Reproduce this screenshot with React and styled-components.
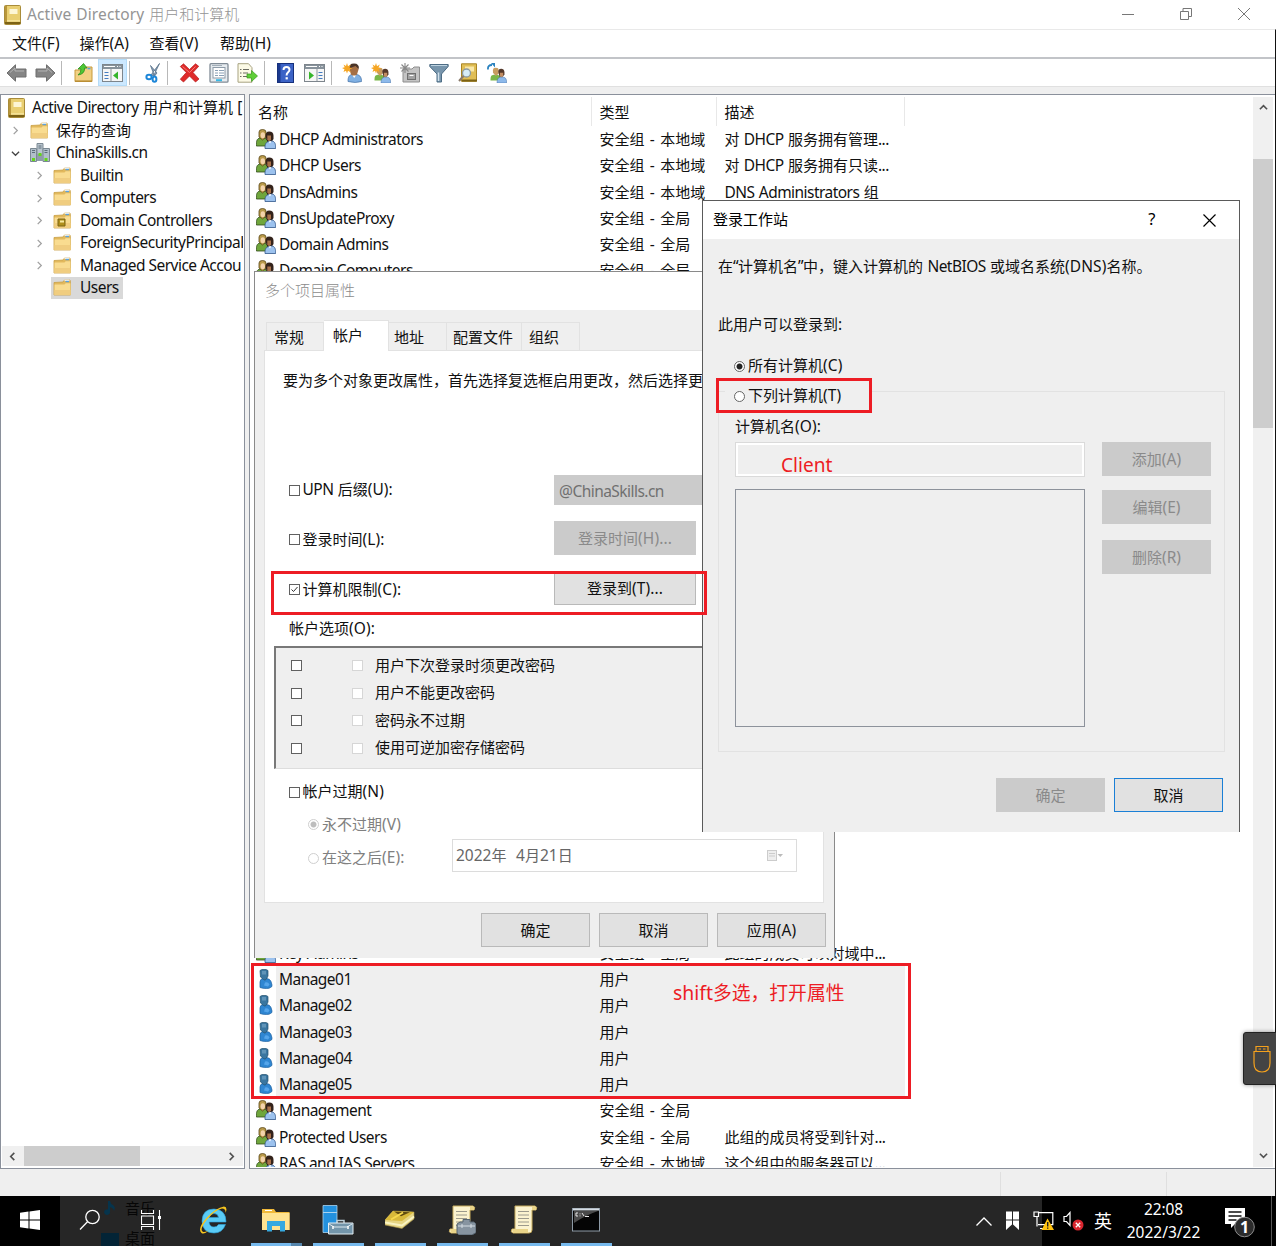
import React from "react";
import styled, { createGlobalStyle, css } from "styled-components";

const Global = createGlobalStyle`
  html, body { margin: 0; padding: 0; overflow: hidden; background: #000; }
  * { box-sizing: border-box; }
  body { font: 15px/22px "Noto Sans", "Noto Sans CJK SC", sans-serif; color: #111; }
  svg { display: block; flex: none; }
`;

/* ---------- text ---------- */
const TextBox = styled.span`
  display: inline-block;
  white-space: pre;
  font-size: ${(p) => p.$size || 15}px;
  color: ${(p) => p.$color || "inherit"};
  line-height: 20px;
  padding-bottom: 2px;
`;
const Latin = styled.span`
  font-size: 1.033em;
  line-height: 1;
  letter-spacing: ${(p) => p.$track}px;
  word-spacing: ${(p) => p.$words}px;
`;
const Han = styled.span`
  font-family: "Noto Sans CJK SC", sans-serif;
  font-weight: ${(p) => (p.$light ? 300 : 400)};
`;
const IS_LATIN = /[\x00-\x7f\u201c\u201d]/;
function latinTrack(run) {
  if (run[0] === "(") return 0.1;
  if (run === " - ") return 0.4;
  return -0.53;
}
function Text({ children, size, color, track, light }) {
  const runs = children.match(/[\x00-\x7f\u201c\u201d]+|[^\x00-\x7f\u201c\u201d]+/g) || [];
  return (
    <TextBox $size={size} $color={color}>
      {runs.map((r, i) =>
        IS_LATIN.test(r[0]) ? (
          <Latin key={i} $track={track ?? latinTrack(r)} $words={/^ | $/.test(r) ? 0.8 : 0}>{r}</Latin>
        ) : (
          <Han key={i} $light={light}>{r}</Han>
        )
      )}
    </TextBox>
  );
}

/* ---------- icons ---------- */
const BookIcon = () => (
  <svg width="17" height="20" viewBox="0 0 17 20">
    <rect x="0.5" y="0.5" width="16" height="19" rx="1" fill="#d6b64e" stroke="#a98c3a" />
    <rect x="3" y="1" width="13" height="15" fill="#e9cf72" />
    <rect x="1" y="1" width="2" height="17" fill="#b8963a" />
    <rect x="5.5" y="4" width="8" height="5" fill="#fdf6d5" />
    <path d="M1 17h15.5v2H1z" fill="#7c6215" />
    <path d="M3 16h13" stroke="#fff3b8" />
  </svg>
);
const FolderIcon = ({ badge }) => (
  <svg width="20" height="18" viewBox="0 0 20 18">
    <path d="M1 3.5L10 3l1.500-2H17l.5 2.500V16H1z" fill="#e2b95c" stroke="#c99f45" strokeWidth=".8" />
    <path d="M1.500 5.500h10l1.200-1.200H17.500V16H1.500z" fill="#f9dc90" />
    <path d="M1.500 11h16v5h-16z" fill="#f0cd80" />
    <path d="M11.500 1.300h5" stroke="#fff" strokeWidth="1.200" />
    <rect x="12.500" y="1.800" width="3.500" height="1.400" fill="#5ba2e0" />
    {badge && <path d="M5 7h7v7H5z" fill="#b08f1c" stroke="#7c6413" />}
    {badge && <path d="M7 8.500h4v2H7z" fill="#f7e9a2" />}
  </svg>
);
const DomainIcon = () => (
  <svg width="20" height="20" viewBox="0 0 20 20">
    <path d="M7 .5h6v12H7z" fill="#b9c5ce" stroke="#7d8a94" />
    <path d="M.5 5.500h6v13h-6zM13 5.500h6.500v13H13z" fill="#b1bfca" stroke="#7a8892" />
    <path d="M7 11h6v7H7z" fill="#8f9da8" />
    <path d="M2 7.500h3M2 9.500h3M14.500 7.500h3M14.500 9.500h3M8.500 3h3M8.500 5h3" stroke="#5d6d79" />
    <path d="M2 15h3v3H2zM14.500 15h3v3h-3zM8.500 10h3v3h-3z" fill="#65d61b" />
  </svg>
);
const GroupIcon = () => (
  <svg width="20" height="20" viewBox="0 0 20 20">
    <path d="M.4 17c-.3-5 .6-7.500 3.600-8h5l3 3v5z" fill="#6fa63c" stroke="#2e4a18" strokeWidth=".8" />
    <path d="M3 8V3Q3 .5 6.500.5T10 3v5l-3.500 3z" fill="#b99a4a" stroke="#5b4718" strokeWidth=".8" />
    <ellipse cx="6.800" cy="6.200" rx="2.200" ry="3" fill="#f3d3ab" />
    <path d="M9.500 8q-.5-5.500 3.700-5.500T17.500 6.500v3.500l-2 3h-4z" fill="#33221a" />
    <path d="M11.300 6.500h3.700v4l-1.800 2-1.900-2z" fill="#a9714a" />
    <path d="M9 19.500c-.2-4.500 1-6.500 4-7l3-.5c3 .5 3.700 3 3.700 7.500z" fill="#9cc2ee" stroke="#31578a" strokeWidth=".8" />
    <path d="M12.500 12.500l1.500 2 1.500-2.400z" fill="#fff" />
  </svg>
);
const UserIcon = () => (
  <svg width="20" height="20" viewBox="0 0 20 20">
    <path d="M4 18.500V13q0-3 3-3.500h3q4 0 5 3l1 3.500q.3 2-1.500 2.500-1 1-4 1-4 0-6.500-1z" fill="#2f86d2" stroke="#1a5e9f" strokeWidth=".7" />
    <path d="M4 1.500L6 .5h4l2 1v5.500l-1.500 3Q9 12 7.500 10.500L4.500 8z" fill="#3a76a0" stroke="#22516f" strokeWidth=".7" />
    <path d="M6 2h4v3.500H6z" fill="#6094b8" />
    <path d="M9 13.500q3-1 4.500 2l-1.500 2-4-1z" fill="#55a5ea" />
  </svg>
);
const ArrowIcon = ({ flip }) => (
  <svg width="21" height="20" viewBox="0 0 21 20">
    <g transform={flip ? "translate(21 0) scale(-1 1)" : undefined}>
      <path d="M1 10L9.500 1.800V6H20v8H9.500v4.200z" fill="#858585" stroke="#6e6e6e" strokeLinejoin="round" />
      <path d="M4 9.500L9 5v3h9" fill="none" stroke="#b4b4b4" />
    </g>
  </svg>
);
const UpFolderIcon = () => (
  <svg width="20" height="20" viewBox="0 0 20 20">
    <path d="M1 7h9l2-3h6v14.500H1z" fill="#f2d084" stroke="#c79a3c" />
    <path d="M1 18h17" stroke="#ae822c" />
    <rect x="13.500" y="4.800" width="3" height="1.500" fill="#5ba2e0" />
    <path d="M4 12Q7 10 7 6H4l5.500-5.500L13 5h-2.500Q11 11 4 12z" fill="#4ec736" stroke="#2d8f1d" strokeWidth=".8" />
  </svg>
);
const PanelIcon = ({ flip }) => (
  <svg width="21" height="18" viewBox="0 0 21 18">
    <rect x=".5" y=".5" width="20" height="17" fill="#f6f6f6" stroke="#7d858c" />
    <path d="M1 1h19v4H1z" fill="#87929b" />
    <path d="M2 2.500h11M15 2.500h1M17.500 2.500h1" stroke="#fff" />
    {flip ? (
      <g>
        <path d="M13 5v12" stroke="#8d969d" />
        <path d="M5 7.500l5 4-5 4z" fill="#36b52b" />
        <path d="M14.500 8.500h4M14.500 11.500h4M14.500 14.500h4" stroke="#447cc0" />
      </g>
    ) : (
      <g>
        <path d="M9 5v12" stroke="#8d969d" />
        <path d="M16 7.500l-5 4 5 4z" fill="#36b52b" />
        <path d="M2.500 8.500h4M2.500 11.500h4M2.500 14.500h4" stroke="#447cc0" />
      </g>
    )}
  </svg>
);
const CutIcon = () => (
  <svg width="16" height="20" viewBox="0 0 16 20">
    <path d="M14.500.5L8.500 13l-2.500-1zM5.500 2.500L9.500 13 12 10z" fill="#8aa0b5" stroke="#58718a" strokeWidth=".8" />
    <ellipse cx="4" cy="14" rx="2.600" ry="2.300" fill="none" stroke="#1d86d8" strokeWidth="2" />
    <ellipse cx="9.500" cy="16.200" rx="1.900" ry="2.600" fill="none" stroke="#1d86d8" strokeWidth="2" />
  </svg>
);
const DeleteIcon = () => (
  <svg width="21" height="20" viewBox="0 0 20 20">
    <path d="M.8 3.500L4 .8l6 5.700L16 .8l3.200 2.500L13.500 9.500l6 6.500-3.500 3L10 13l-6 6-3.200-2.800 6-6.700z" fill="#df2a2a" stroke="#b51c1c" strokeWidth=".7" />
    <path d="M3 3.500l7 6 6-6" fill="none" stroke="#f47a74" />
  </svg>
);
const PropsIcon = () => (
  <svg width="20" height="20" viewBox="0 0 20 20">
    <rect x="1" y=".7" width="18" height="18.500" rx="1" fill="#e6ebef" stroke="#818c96" strokeWidth="1.300" />
    <rect x="4" y="4.500" width="12" height="10.500" fill="#fff" stroke="#8d9ba8" />
    <path d="M3 2.500h10" stroke="#a3afb9" />
    <path d="M6 7.500h3M6 10h3M6 12.500h3M10 7.500h5M10 10h5M10 12.500h5" stroke="#8aa0b5" />
    <path d="M7 17.200h6" stroke="#39b9e6" strokeWidth="2" />
  </svg>
);
const ExportIcon = () => (
  <svg width="21" height="20" viewBox="0 0 21 20">
    <path d="M1 .7h10.500l3.500 4v14.500H1z" fill="#fcfae6" stroke="#a7a281" />
    <path d="M3 6.500h1.500M3 10h1.500M3 13.500h1.500M6 6.500h6M6 10h5M6 13.500h5" stroke="#6c6c62" strokeWidth="1.200" />
    <path d="M10 11h4.500V7.500L20.500 13l-6 5.500V15H10z" fill="#5fce38" stroke="#3a9a20" strokeWidth=".7" />
  </svg>
);
const HelpIcon = () => (
  <svg width="17" height="20" viewBox="0 0 17 20">
    <rect x=".5" y=".5" width="16" height="19" fill="#3c63c6" stroke="#16307c" />
    <path d="M1 1h2.500v18H1z" fill="#1b398f" />
    <path d="M6.500 7q0-3 3-3t3 2.800q0 1.500-1.500 2.500T9.600 12.500" fill="none" stroke="#fff" strokeWidth="2" />
    <rect x="8.600" y="14.200" width="2.200" height="2.200" fill="#fff" />
  </svg>
);
const Spark = () => (
  <path d="M5 0l1 3.200L8.800 1.500 7.500 4.500l3 .7-3 1.200 1.300 3L6 7.800 5 10.500 4 7.800 1.500 9l1-2.800L0 5l2.700-.8L1.500 1.500 4 3z" fill="#f6a623" />
);
const NewUserIcon = () => (
  <svg width="20" height="20" viewBox="0 0 20 20">
    <path d="M6 18.500c0-4.500 1-6.500 4-7h4.500c4 .5 5 3.500 5 7q-6 2-13.500 0z" fill="#7fb0e3" stroke="#416fa5" strokeWidth=".7" />
    <path d="M7.500 6.500q0-5.500 4.500-5.500t4.500 5.500l-1.500 5-3 2-3-2z" fill="#a46f45" />
    <path d="M7 6q-.5-5.500 5-5.500T16.800 6l-3.300-3-4 1.500z" fill="#4a3428" />
    <path d="M10.500 12.500l1.700 2.500 1.800-2.500z" fill="#fff" />
    <Spark />
  </svg>
);
const SmallGroup = () => (
  <g transform="translate(3.500 4) scale(.82)">
    <path d="M0 16c0-5 1-6 4-6.500h5l3 2v5H0z" fill="#7ab648" />
    <path d="M3 7V4Q3 1 6.500 1T10 4v4l-3.500 3z" fill="#c79c60" />
    <path d="M9.500 6q0-4 3.500-4t4 4v3l-2 3h-4z" fill="#54382a" />
    <path d="M11.500 7h4v4l-2 2-2-2z" fill="#c28d62" />
    <path d="M8 19.500c0-5 1.500-6.500 4-7h4c3 .5 3.700 3 3.700 7z" fill="#8db9ea" stroke="#3d6ba5" strokeWidth=".6" />
  </g>
);
const NewGroupIcon = () => (
  <svg width="20" height="20" viewBox="0 0 20 20"><SmallGroup /><Spark /></svg>
);
const NewOuIcon = () => (
  <svg width="20" height="20" viewBox="0 0 20 20">
    <path d="M3 6h9l2-2h5.500v15H3z" fill="#c4c4c4" stroke="#8e8e8e" />
    <rect x="7.500" y="10.500" width="8" height="6" fill="#a2a2a2" stroke="#6f6f6f" />
    <path d="M9.500 12.500h4" stroke="#fff" />
    <path d="M5 0v10M0 5h10M1.500 1.500l7 7M8.500 1.500l-7 7" stroke="#888" strokeWidth="1.100" />
  </svg>
);
const FilterIcon = () => (
  <svg width="20" height="20" viewBox="0 0 20 20">
    <path d="M.8 1.500h18.400v2L12.500 11v8h-4.500V11L.8 3.500z" fill="#7795ac" stroke="#4d6c84" />
    <path d="M2 2.500h16" stroke="#bdd2e0" />
    <path d="M9.500 9.500v8.500" stroke="#d2e2ed" strokeWidth="1.500" />
  </svg>
);
const FindIcon = () => (
  <svg width="20" height="20" viewBox="0 0 20 20">
    <path d="M3.500.8h15v17.500h-15z" fill="#e0be55" stroke="#a98525" />
    <path d="M4 16.500h15v2H4z" fill="#7c6215" />
    <path d="M7 3.500h9v5H7z" fill="#f8e7a8" />
    <circle cx="8.500" cy="10" r="4" fill="#d6edf8" stroke="#8c999f" strokeWidth="1.300" />
    <path d="M5.500 13L1 18" stroke="#8a7a6a" strokeWidth="2" />
  </svg>
);
const JoinGroupIcon = () => (
  <svg width="20" height="20" viewBox="0 0 20 20">
    <SmallGroup />
    <path d="M1 6.500Q.5 2 5 2" fill="none" stroke="#2a82bf" strokeWidth="1.800" />
    <path d="M4 0h4v4.500z" fill="#2a82bf" />
  </svg>
);
const Chevron = ({ dir = "right", color = "#505050", size = 9, weight = 1.8 }) => {
  const rot = { right: 0, down: 90, left: 180, up: 270 }[dir];
  return (
    <svg width={size} height={size} viewBox="0 0 10 10">
      <path transform={`rotate(${rot} 5 5)`} d="M3 1l4 4-4 4" fill="none" stroke={color} strokeWidth={weight} />
    </svg>
  );
};

/* ---------- main window ---------- */
const Desktop = styled.div`
  position: relative;
  width: 1276px;
  height: 1246px;
  overflow: hidden;
  display: flex;
  flex-direction: column;
`;
const MainWindow = styled.div`
  height: 1196px;
  display: flex;
  flex-direction: column;
  background: #efefef;
`;
const TitleBar = styled.div`
  height: 29px;
  flex: none;
  background: #fff;
  display: flex;
  align-items: center;
  padding-left: 4px;
  gap: 6px;
`;
const Caption = styled.div`
  margin-left: auto;
  display: flex;
  align-items: center;
  gap: 46px;
  padding: 0 26px 1px 0;
`;
const Body = styled.div`
  flex: 1;
  min-height: 0;
  border-right: 1px solid #111;
  border-top: 1px solid #e9e9e9;
  display: flex;
  flex-direction: column;
`;
const MenuBar = styled.div`
  height: 27px;
  flex: none;
  background: #fff;
  display: flex;
  align-items: center;
  padding-left: 12px;
`;
const MenuItem = styled.div`
  width: ${(p) => p.$w}px;
`;
const ToolBar = styled.div`
  height: 30px;
  flex: none;
  background: #fff;
  border-top: 2px solid #c2c4c8;
  border-bottom: 1px solid #e0e0e0;
  display: flex;
  padding-left: 2px;
`;
const Tool = styled.div`
  width: 29px;
  display: flex;
  align-items: center;
  justify-content: center;
  padding-top: 1px;
  ${(p) => p.$on && css`background: #cce8ff; box-shadow: inset 0 0 0 1px #b5dcf8;`}
`;
const Separator = styled.div`
  width: ${(p) => p.$w}px;
  padding: 2px 0 1px ${(p) => p.$at}px;
  &::before { content: ""; display: block; width: 1px; height: 100%; background: #b8b8b8; }
`;
const Panes = styled.div`
  flex: 1;
  min-height: 0;
  display: flex;
  gap: 4px;
  padding-top: 7px;
`;
const Pane = styled.div`
  background: #fff;
  border: 1.500px solid #8a909b;
  overflow: hidden;
  display: flex;
`;
const TreePane = styled(Pane)`
  width: 245px;
  flex-direction: column;
  padding: 2px 1px 2px 1px;
`;
const ListPane = styled(Pane)`
  flex: 1;
  border-right: none;
  padding: 2px 2px 1px 0;
`;
const Tree = styled.div`
  flex: 1;
  overflow: hidden;
`;
const TreeRow = styled.div`
  height: 22.500px;
  display: flex;
  align-items: center;
  white-space: nowrap;
  padding-left: ${(p) => p.$indent}px;
`;
const Twisty = styled.div`
  width: ${(p) => p.$w}px;
  flex: none;
  padding-left: 1px;
`;
const TreeLabel = styled.div`
  display: flex;
  align-items: center;
  height: 22px;
  gap: ${(p) => p.$gap || 7}px;
  padding: 0 4px 0 2px;
  background: ${(p) => (p.$on ? "#d9d9d9" : "transparent")};
`;
const HScroll = styled.div`
  height: 20px;
  background: #f0f0f0;
  display: flex;
  align-items: center;
  padding: 0 7px 0 6px;
`;
const HThumb = styled.div`
  width: 116px;
  height: 20px;
  background: #cdcdcd;
  margin: 0 auto 0 7px;
`;
const ListArea = styled.div`
  flex: 1;
  overflow: hidden;
`;
const Columns = styled.div`
  display: grid;
  grid-template-columns: 342px 125px 188px;
`;
const HeaderRow = styled(Columns)`
  height: 29px;
`;
const HeaderCell = styled.div`
  border-right: 1px solid #e8e8e8;
  padding: ${(p) => p.$pad};
`;
const ListRow = styled(Columns)`
  height: 26.250px;
  align-items: center;
`;
const NameCell = styled.div`
  display: flex;
  align-items: center;
  height: 100%;
  padding-left: 6px;
`;
const NameLabel = styled.div`
  flex: 1;
  height: 100%;
  padding: 2px 0 0 3px;
  background: ${(p) => (p.$on ? "#efefef" : "transparent")};
`;
const Cell = styled.div`
  height: 100%;
  padding: 2px 0 0 7.500px;
  background: ${(p) => (p.$on ? "#efefef" : "transparent")};
`;
const CoveredRows = styled.div`
  height: 656.250px;
`;
const VScroll = styled.div`
  width: 20px;
  background: #f0f0f0;
  display: flex;
  flex-direction: column;
  align-items: center;
  padding: 6px 0 7px;
`;
const VThumb = styled.div`
  width: 20px;
  height: 269px;
  background: #cdcdcd;
  margin: 47px 0 auto;
`;
const StatusBar = styled.div`
  height: 27px;
  flex: none;
  display: grid;
  grid-template-columns: 1001px 166px 1fr;
`;
const StatusCell = styled.div`
  border-right: 1px solid #dfdfdf;
  margin-top: 3px;
`;

const TREE = [
  { t: "保存的查询", lv: 1, dir: "right", icon: <FolderIcon /> },
  { t: "ChinaSkills.cn", lv: 1, dir: "down", icon: <DomainIcon /> },
  { t: "Builtin", lv: 2, dir: "right", icon: <FolderIcon /> },
  { t: "Computers", lv: 2, dir: "right", icon: <FolderIcon /> },
  { t: "Domain Controllers", lv: 2, dir: "right", icon: <FolderIcon badge /> },
  { t: "ForeignSecurityPrincipal", lv: 2, dir: "right", icon: <FolderIcon /> },
  { t: "Managed Service Accou", lv: 2, dir: "right", icon: <FolderIcon /> },
  { t: "Users", lv: 2, icon: <FolderIcon />, on: true },
];
const LOCAL = "安全组 - 本地域";
const GLOBAL = "安全组 - 全局";
const TOP_ROWS = [
  ["DHCP Administrators", LOCAL, "对 DHCP 服务拥有管理..."],
  ["DHCP Users", LOCAL, "对 DHCP 服务拥有只读..."],
  ["DnsAdmins", LOCAL, "DNS Administrators 组"],
  ["DnsUpdateProxy", GLOBAL, ""],
  ["Domain Admins", GLOBAL, ""],
  ["Domain Computers", GLOBAL, ""],
];
const BOTTOM_ROWS = [
  ["Key Admins", GLOBAL, "此组的成员可以对域中..."],
  ["Manage01", "用户", "", true],
  ["Manage02", "用户", "", true],
  ["Manage03", "用户", "", true],
  ["Manage04", "用户", "", true],
  ["Manage05", "用户", "", true],
  ["Management", GLOBAL, ""],
  ["Protected Users", GLOBAL, "此组的成员将受到针对..."],
  ["RAS and IAS Servers", LOCAL, "这个组中的服务器可以..."],
];
const Entry = ({ row: [name, type, desc, on] }) => (
  <ListRow>
    <NameCell>
      {on ? <UserIcon /> : <GroupIcon />}
      <NameLabel $on={on}><Text>{name}</Text></NameLabel>
    </NameCell>
    <Cell $on={on}><Text>{type}</Text></Cell>
    <Cell $on={on}><Text>{desc}</Text></Cell>
  </ListRow>
);

/* ---------- dialogs ---------- */
const Dialog = styled.div`
  position: absolute;
  left: ${(p) => p.$x}px;
  top: ${(p) => p.$y}px;
  width: ${(p) => p.$w}px;
  height: ${(p) => p.$h}px;
  border: 1px solid ${(p) => p.$edge};
  border-bottom: none;
  background: #efefef;
  display: flex;
  flex-direction: column;
`;
const DialogTitle = styled.div`
  height: 38px;
  flex: none;
  background: #fff;
  display: flex;
  align-items: center;
  padding: 0 23px 0 ${(p) => p.$pad}px;
`;
const TitleButtons = styled.div`
  margin-left: auto;
  display: flex;
  align-items: center;
  gap: 48px;
`;
const Tabs = styled.div`
  display: flex;
  align-items: flex-end;
  height: 40px;
  padding-left: 11px;
`;
const Tab = styled.div`
  width: ${(p) => p.$w}px;
  height: ${(p) => (p.$on ? 31 : 28)}px;
  margin-bottom: ${(p) => (p.$on ? -1 : 0)}px;
  padding: 3px 0 0 ${(p) => p.$pad}px;
  border: 1px solid #e2e2e2;
  border-bottom: none;
  border-left-width: ${(p) => (p.$first ? 1 : 0)}px;
  background: ${(p) => (p.$on ? "#fff" : "#efefef")};
  position: relative;
`;
const Page = styled.div`
  height: 553px;
  margin: 0 10px 0 9px;
  border: 1px solid #e2e2e2;
  background: #fff;
  display: flex;
  flex-direction: column;
  padding-top: 14px;
`;
const Row = styled.div`
  height: ${(p) => p.$h}px;
  margin-top: ${(p) => p.$mt || 0}px;
  padding-left: ${(p) => p.$pl}px;
  padding-top: ${(p) => p.$pt || 0}px;
  display: flex;
  align-items: center;
  flex: none;
`;
const Check = styled.div`
  width: 11px;
  height: 11px;
  flex: none;
  margin-right: ${(p) => p.$gap ?? 3}px;
  border: 1px solid ${(p) => (p.$dim ? "#d6d6d6" : "#606060")};
  background: #fff;
`;
const Radio = styled.div`
  width: 11px;
  height: 11px;
  flex: none;
  margin-right: 3px;
  border-radius: 50%;
  border: 1px solid ${(p) => (p.$dim ? "#cfcfcf" : "#666")};
  background: ${(p) =>
    p.$on ? `radial-gradient(circle, ${p.$dim ? "#bdbdbd" : "#222"} 0 2.600px, #fff 3.400px)` : "#fff"};
`;
const Field = styled.div`
  margin-left: auto;
  width: 269px;
  height: 30px;
  background: #cbcbcb;
  padding: 5px 0 0 5px;
`;
const Button = styled.div`
  width: ${(p) => p.$w || 109}px;
  height: 34px;
  display: flex;
  align-items: center;
  justify-content: center;
  flex: none;
  background: ${(p) => (p.$off ? "#cbcbcb" : "#e1e1e1")};
  border: 1px solid ${(p) => (p.$off ? "#cbcbcb" : p.$focus ? "#1a7fd6" : "#b9b9b9")};
  padding-top: 1px;
  color: ${(p) => (p.$off ? "#8a8a8a" : "#111")};
`;
const RowButton = styled(Button)`
  margin-top: -3px;
  margin-left: auto;
  margin-right: 127px;
`;
const OptionList = styled.div`
  height: 123px;
  flex: none;
  margin: 6px 26px 0 9px;
  border: 2px solid #787878;
  border-right: none;
  border-bottom: 1px solid #ddd;
  background: #efefef;
  padding: 4px 0 0 15px;
`;
const OptionRow = styled.div`
  display: flex;
  align-items: center;
  height: 27.500px;
`;
const DateField = styled.div`
  margin: -5px 26px 0 auto;
  width: 345px;
  height: 33px;
  border: 1px solid #dcdcdc;
  display: flex;
  align-items: center;
  justify-content: space-between;
  padding: 0 13px 0 3px;
`;
const Footer = styled.div`
  display: flex;
  justify-content: flex-end;
  gap: 9px;
  padding: ${(p) => p.$pad};
`;
const Group = styled.div`
  margin: 10px 14px 0 15px;
  height: 361px;
  flex: none;
  border: 1px solid #e2e2e2;
`;
const Legend = styled.div`
  width: 146px;
  height: 30px;
  margin: -11px 0 0 6px;
  padding-left: 9px;
  background: #efefef;
  display: flex;
  align-items: center;
`;
const GroupBody = styled.div`
  display: flex;
  gap: 17px;
  padding: 5px 0 0 16px;
`;
const NameColumn = styled.div`
  display: flex;
  flex-direction: column;
  width: 350px;
`;
const NameInput = styled.div`
  height: 35px;
  margin: 4px 0 12px;
  border: 1px solid #dadada;
  box-shadow: inset 0 0 0 2px #fff;
`;
const NameList = styled.div`
  height: 238px;
  border: 1.500px solid #8d929b;
`;
const ButtonColumn = styled.div`
  display: flex;
  flex-direction: column;
  padding-top: 26px;
`;
const Spacer = styled.div`
  height: ${(p) => p.$h}px;
`;

/* ---------- annotations laid over the windows ---------- */
const Mark = styled.div`
  position: absolute;
  left: ${(p) => p.$x}px;
  top: ${(p) => p.$y}px;
  width: ${(p) => p.$w}px;
  height: ${(p) => p.$h}px;
  border: 3px solid #ed1c24;
`;
const Note = styled.div`
  position: absolute;
  left: ${(p) => p.$x}px;
  top: ${(p) => p.$y}px;
`;
const UsbTab = styled.div`
  position: absolute;
  left: 1243px;
  top: 1032px;
  width: 36px;
  height: 53px;
  border-radius: 3px;
  background: #444;
  border: 1px solid #222;
  box-shadow: 0 0 4px #0006;
  padding: 12px 0 0 8px;
`;

/* ---------- taskbar ---------- */
const TaskBar = styled.div`
  height: 50px;
  background: linear-gradient(90deg, #000 60px, #262626 60px 1042px, #000 1042px);
  display: flex;
  position: relative;
  color: #fff;
`;
const Ghosts = styled.div`
  position: absolute;
  left: 101px;
  top: -2px;
  color: #060606;
`;
const GhostRow = styled.div`
  display: flex;
  align-items: center;
  gap: 6px;
  height: 30px;
`;
const Task = styled.div`
  width: ${(p) => p.$w}px;
  display: flex;
  align-items: center;
  justify-content: center;
  position: relative;
  padding-bottom: 2px;
`;
const Running = styled.div`
  position: absolute;
  left: 6px;
  bottom: 0;
  width: 51px;
  height: 3px;
  background: ${(p) => (p.$multi ? "linear-gradient(90deg, #76b9ed 40px, #5686ad 40px)" : "#76b9ed")};
`;
const Tray = styled.div`
  margin-left: auto;
  display: flex;
  align-items: center;
`;
const TrayItem = styled.div`
  width: ${(p) => p.$w}px;
  display: flex;
  justify-content: center;
`;
const Clock = styled.div`
  width: 91px;
  display: flex;
  flex-direction: column;
  align-items: center;
  gap: 1px;
`;
const ShowDesktop = styled.div`
  width: 5px;
  height: 50px;
  border-left: 1px solid #555;
`;

const WindowsLogo = () => (
  <svg width="20" height="20" viewBox="0 0 20 20">
    <path d="M0 2.800L8.500 1.600v7.900H0zM9.500 1.500L20 0v9.500H9.500zM0 10.500h8.500v7.900L0 17.200zM9.500 10.500H20V20L9.500 18.500z" fill="#fff" />
  </svg>
);
const SearchIcon = () => (
  <svg width="22" height="22" viewBox="0 0 22 22">
    <circle cx="13.500" cy="8" r="6.700" fill="none" stroke="#fff" strokeWidth="1.300" />
    <path d="M8.500 12.800L1 20.500" stroke="#fff" strokeWidth="1.300" />
  </svg>
);
const TaskViewIcon = () => (
  <svg width="20" height="20" viewBox="0 0 20 20">
    <path d="M.5 0v3.500h12V0M.5 6h12v8.500H.5zM.5 20v-3.500h12V20M18.500 0v20" fill="none" stroke="#fff" strokeWidth="1.100" />
    <path d="M17 6h3v3h-3z" fill="#fff" />
  </svg>
);
const IeIcon = () => (
  <svg width="30" height="30" viewBox="0 0 30 30">
    <path d="M28 17H11q.5 5 5 5 3 0 4.500-2.500h7Q24.500 28 16 28 4.500 28 4 16 4.500 4 16 4q12 .5 12 13zM11 12.500h9.500Q20 8.500 16 8.500t-5 4z" fill="#5acbf5" fillRule="evenodd" stroke="#2ba3dd" strokeWidth=".6" />
    <path d="M3.500 28Q-1 24 8 13.500 18 2.500 26 1.500 30 2 27.500 8 28 3.500 24 3.500 17 5 9 14.500 1.500 24 4.500 26.500 7 28 11 25 6 30 3.500 28z" fill="#f7c51e" />
  </svg>
);
const ExplorerIcon = () => (
  <svg width="28" height="24" viewBox="0 0 28 24">
    <path d="M0 1h12l2 3h13.500v18H0z" fill="#f0b93a" />
    <path d="M0 5h27.500v17H0z" fill="#ffe391" />
    <path d="M3 2.500h7" stroke="#fff" />
    <path d="M5 23.500V13h18v10.500h-5V18h-8v5.500z" fill="#35a9e1" />
  </svg>
);
const ServerManagerIcon = () => (
  <svg width="32" height="30" viewBox="0 0 32 30">
    <path d="M1 .5h14v27H1z" fill="#2391de" stroke="#a9d3ef" strokeWidth=".8" />
    <path d="M1 7.500h14" stroke="#a9d3ef" />
    <path d="M15 18v-2.500h7V18" fill="none" stroke="#b9ccd6" strokeWidth="1.500" />
    <path d="M6.500 18H31v11H6.500z" fill="#7395aa" stroke="#e3edf2" />
    <path d="M7 19l5 3h13l5-3" fill="none" stroke="#dbe7ee" />
    <path d="M11 21v3M26 21v3" stroke="#fff" strokeWidth="1.500" />
  </svg>
);
const BooksIcon = () => (
  <svg width="30" height="20" viewBox="0 0 30 20">
    <path d="M0 10L8 1l21 1v7L17 18.500 0 15z" fill="#e6d584" stroke="#a4904a" strokeWidth=".6" />
    <path d="M0 10L8 1l21 1-12 9z" fill="#d8b93a" />
    <path d="M9 1.500l16 .8-9 4z" fill="#5e4a10" />
    <path d="M6 9.500l12-7" stroke="#f6d94e" strokeWidth="2" />
    <path d="M0 12.500l17 3 12-9" stroke="#f9f3c2" strokeWidth="2" fill="none" />
  </svg>
);
const ScrollIcon = ({ box }) => (
  <svg width="28" height="30" viewBox="0 0 28 30">
    <path d="M5 1h20q3 1 1 4h-4v20q0 3-3 3H3q-3-1-1-4h3z" fill="#fbf3cf" stroke="#c7ac5c" />
    <path d="M22 5V2q1-2 4 0v3zM2 24h16v4H3z" fill="#e9d489" />
    <path d="M8 6.500h11M8 10h11M8 13.500h11M8 17h11M8 20.500h11" stroke="#9c9a8c" />
    {box && <path d="M9 19l3-2h3v-2.500h7V17h4l2 2v8.500L24 30H11l-2-2z" fill="#8794a0" stroke="#566470" />}
    {box && <path d="M10 21h17M14 19v4M23 19v4" stroke="#d5dde3" />}
  </svg>
);
const ConsoleIcon = () => (
  <svg width="28" height="24" viewBox="0 0 28 24">
    <rect x=".5" y=".5" width="27" height="22.500" fill="#050505" stroke="#8d9aa6" />
    <path d="M1 1.500h26" stroke="#d5dce3" strokeWidth="2" />
    <path d="M2 3h24Q14 7 2 15z" fill="#4a4a4a" />
    <path d="M6 5H4v3h2M8 5.500v.8M8 7.500v.8M10 5l2 3M13 8.500h4" stroke="#e6e6e6" fill="none" />
  </svg>
);
const FlagIcon = () => (
  <svg width="14" height="20" viewBox="0 0 14 20">
    <path d="M0 .5h6v8H0zM7 .5h6v8H7zM0 9.500h6v4L0 19zM7 9.500h6V19l-6-5.500z" fill="#fff" />
  </svg>
);
const NetworkIcon = () => (
  <svg width="21" height="20" viewBox="0 0 21 20">
    <path d="M5 1.700h14.800v12H5M4 6v9.500M1 1h4.500v4.500H1zM7 17.500h6" fill="none" stroke="#fff" strokeWidth="1.200" />
    <path d="M14.500 7.500L21 19H8.500z" fill="#ffc20e" />
    <path d="M14.700 11v4.500M14.700 16.500v1.300" stroke="#222" strokeWidth="1.400" />
  </svg>
);
const VolumeIcon = () => (
  <svg width="21" height="20" viewBox="0 0 21 20">
    <path d="M1 5.500h2.500l3.500-4v13l-3.500-4H1z" fill="none" stroke="#fff" strokeWidth="1.200" />
    <circle cx="15" cy="14" r="5.500" fill="#d9262f" />
    <path d="M12.800 11.800l4.400 4.400M17.200 11.800l-4.400 4.400" stroke="#fff" strokeWidth="1.300" />
  </svg>
);
const NoticeIcon = () => (
  <svg width="32" height="34" viewBox="0 0 32 34">
    <path d="M1 4h20v16H11l-4 4v-4H1z" fill="#fff" />
    <path d="M4.500 8h13M4.500 12h13M4.500 16h8" stroke="#111" strokeWidth="1.300" />
    <circle cx="20.500" cy="23" r="9.800" fill="#2b2b2b" stroke="#8d8d8d" />
    <text x="20.500" y="28.500" textAnchor="middle" fontFamily="Noto Sans" fontWeight="700" fontSize="16" fill="#fff">1</text>
  </svg>
);

const TASKS = [
  <ExplorerIcon />, <ServerManagerIcon />, <BooksIcon />, <ScrollIcon box />, <ScrollIcon />, <ConsoleIcon />,
];

export default function App() {
  return (
    <Desktop>
      <Global />
      <MainWindow>
        <TitleBar>
          <BookIcon />
          <Text color="#949494" track={0.13} light>Active Directory 用户和计算机</Text>
          <Caption>
            <svg width="12" height="12"><path d="M0 6.500h12" stroke="#777" /></svg>
            <svg width="12" height="12"><path d="M.5 3.500h8v8h-8zM3 3V.5h8.500v8H9" fill="none" stroke="#777" /></svg>
            <svg width="12" height="12"><path d="M0 0l12 12M12 0L0 12" stroke="#777" /></svg>
          </Caption>
        </TitleBar>
        <Body>
          <MenuBar>
            <MenuItem $w={67.5}><Text>文件(F)</Text></MenuItem>
            <MenuItem $w={70}><Text>操作(A)</Text></MenuItem>
            <MenuItem $w={70.5}><Text>查看(V)</Text></MenuItem>
            <MenuItem $w={70}><Text>帮助(H)</Text></MenuItem>
          </MenuBar>
          <ToolBar>
            <Tool><ArrowIcon /></Tool>
            <Tool><ArrowIcon flip /></Tool>
            <Separator $w={9} $at={1} />
            <Tool><UpFolderIcon /></Tool>
            <Tool $on><PanelIcon /></Tool>
            <Separator $w={11} $at={2} />
            <Tool><CutIcon /></Tool>
            <Separator $w={8} $at={0} />
            <Tool><DeleteIcon /></Tool>
            <Tool><PropsIcon /></Tool>
            <Tool><ExportIcon /></Tool>
            <Separator $w={9} $at={2} />
            <Tool><HelpIcon /></Tool>
            <Tool><PanelIcon flip /></Tool>
            <Separator $w={8} $at={2} />
            <Tool><NewUserIcon /></Tool>
            <Tool><NewGroupIcon /></Tool>
            <Tool><NewOuIcon /></Tool>
            <Tool><FilterIcon /></Tool>
            <Tool><FindIcon /></Tool>
            <Tool><JoinGroupIcon /></Tool>
          </ToolBar>
          <Panes>
            <TreePane>
              <Tree>
                <TreeRow $indent={4}>
                  <TreeLabel><BookIcon /><Text>Active Directory 用户和计算机 [</Text></TreeLabel>
                </TreeRow>
                {TREE.map((n) => (
                  <TreeRow key={n.t} $indent={n.lv === 1 ? 8 : 32}>
                    <Twisty $w={n.lv === 1 ? 18 : 17}>
                      {n.dir && <Chevron dir={n.dir} color={n.dir === "down" ? "#444" : "#a0a0a0"} weight={1.4} />}
                    </Twisty>
                    <TreeLabel $on={n.on} $gap={n.lv === 1 ? 6 : 7}>{n.icon}<Text>{n.t}</Text></TreeLabel>
                  </TreeRow>
                ))}
              </Tree>
              <HScroll>
                <Chevron dir="left" />
                <HThumb />
                <Chevron />
              </HScroll>
            </TreePane>
            <ListPane>
              <ListArea>
                <HeaderRow>
                  <HeaderCell $pad="4px 0 0 8px"><Text>名称</Text></HeaderCell>
                  <HeaderCell $pad="4px 0 0 7.5px"><Text>类型</Text></HeaderCell>
                  <HeaderCell $pad="4px 0 0 7.5px"><Text>描述</Text></HeaderCell>
                </HeaderRow>
                {TOP_ROWS.map((r) => <Entry key={r[0]} row={r} />)}
                <CoveredRows />
                {BOTTOM_ROWS.map((r) => <Entry key={r[0]} row={r} />)}
              </ListArea>
              <VScroll>
                <Chevron dir="up" />
                <VThumb />
                <Chevron dir="down" />
              </VScroll>
            </ListPane>
          </Panes>
          <StatusBar><StatusCell /><StatusCell /></StatusBar>
        </Body>
      </MainWindow>

      <TaskBar>
        <Ghosts>
          <GhostRow>
            <svg width="18" height="18" viewBox="0 0 18 18"><path d="M9 1v10.500a3 2.800 0 1 1-2-2V1h2q.5 3 3 4 3 2 1 6-.5-3-4-4z" fill="#06344c" /></svg>
            <Text>音乐</Text>
          </GhostRow>
          <GhostRow>
            <svg width="18" height="13"><path d="M0 0h18v13H0z" fill="#032436" /></svg>
            <Text>桌面</Text>
          </GhostRow>
        </Ghosts>
        <Task $w={60}><WindowsLogo /></Task>
        <Task $w={60}><SearchIcon /></Task>
        <Task $w={61}><TaskViewIcon /></Task>
        <Task $w={64}><IeIcon /></Task>
        {TASKS.map((icon, i) => (
          <Task key={i} $w={62}>{icon}<Running $multi={i === 0} /></Task>
        ))}
        <Tray>
          <TrayItem $w={28}>
            <svg width="16" height="9"><path d="M.5 8.500L8 1l7.500 7.500" fill="none" stroke="#fff" strokeWidth="1.300" /></svg>
          </TrayItem>
          <TrayItem $w={30}><FlagIcon /></TrayItem>
          <TrayItem $w={31}><NetworkIcon /></TrayItem>
          <TrayItem $w={29}><VolumeIcon /></TrayItem>
          <TrayItem $w={30}><Text size={18}>英</Text></TrayItem>
          <Clock><Text track={-0.1}>22:08</Text><Text track={0}>2022/3/22</Text></Clock>
          <TrayItem $w={62}><NoticeIcon /></TrayItem>
          <ShowDesktop />
        </Tray>
      </TaskBar>

      <Dialog $x={254} $y={271} $w={581} $h={687} $edge="#8a8a8a">
        <DialogTitle $pad={10}><Text color="#8c8c8c" light>多个项目属性</Text></DialogTitle>
        <Tabs>
          <Tab $w={58} $pad={7} $first><Text>常规</Text></Tab>
          <Tab $w={65} $pad={9} $on><Text>帐户</Text></Tab>
          <Tab $w={58} $pad={5}><Text>地址</Text></Tab>
          <Tab $w={75} $pad={6}><Text>配置文件</Text></Tab>
          <Tab $w={58} $pad={7}><Text>组织</Text></Tab>
        </Tabs>
        <Page>
          <Row $h={30} $pt={1} $pl={18}><Text>要为多个对象更改属性，首先选择复选框启用更改，然后选择更</Text></Row>
          <Row $h={30} $mt={80} $pl={23.5}>
            <Check /><Text>UPN 后缀(U):</Text>
            <Field><Text color="#707070">@ChinaSkills.cn</Text></Field>
          </Row>
          <Row $h={34} $mt={16} $pl={23.5} $pt={3}>
            <Check /><Text>登录时间(L):</Text>
            <RowButton $w={142} $off><Text>登录时间(H)...</Text></RowButton>
          </Row>
          <Row $h={34} $mt={16} $pl={23.5} $pt={3}>
            <Check><svg width="9" height="9"><path d="M1.500 4.500l2 2 4-4.500" fill="none" stroke="#333" /></svg></Check>
            <Text>计算机限制(C):</Text>
            <RowButton $w={142}><Text>登录到(T)...</Text></RowButton>
          </Row>
          <Row $h={24} $mt={11} $pt={2} $pl={24}><Text>帐户选项(O):</Text></Row>
          <OptionList>
            {["用户下次登录时须更改密码", "用户不能更改密码", "密码永不过期", "使用可逆加密存储密码"].map((t) => (
              <OptionRow key={t}><Check $gap={50} /><Check $dim $gap={12} /><Text>{t}</Text></OptionRow>
            ))}
          </OptionList>
          <Row $h={24} $mt={11} $pl={23.5}><Check /><Text>帐户过期(N)</Text></Row>
          <Row $h={24} $mt={8} $pt={1} $pl={43}><Radio $on $dim /><Text color="#808080">永不过期(V)</Text></Row>
          <Row $h={33} $mt={3} $pt={5} $pl={43}>
            <Radio $dim /><Text color="#808080">在这之后(E):</Text>
            <DateField>
              <Text color="#666" track={0}>2022年  4月21日</Text>
              <svg width="16" height="11"><rect x=".5" y=".5" width="9" height="10" fill="#eee" stroke="#ccc" /><path d="M2 3.500h6M2 6h6" stroke="#ccc" /><path d="M10.500 4h5.500l-2.700 3z" fill="#bbb" /></svg>
            </DateField>
          </Row>
        </Page>
        <Footer $pad="10px 8px 0 0">
          <Button><Text>确定</Text></Button>
          <Button><Text>取消</Text></Button>
          <Button><Text>应用(A)</Text></Button>
        </Footer>
      </Dialog>

      <Dialog $x={702} $y={200} $w={538} $h={632} $edge="#5a5a5a">
        <DialogTitle $pad={10}>
          <Text color="#000">登录工作站</Text>
          <TitleButtons>
            <Text color="#000" size={16}>?</Text>
            <svg width="13" height="13"><path d="M.5.5l12 12M12.500.5l-12 12" stroke="#000" strokeWidth="1.200" /></svg>
          </TitleButtons>
        </DialogTitle>
        <Row $h={30} $mt={13} $pl={15}><Text>在“计算机名”中，键入计算机的 NetBIOS 或域名系统(DNS)名称。</Text></Row>
        <Row $h={30} $mt={28} $pl={15}><Text>此用户可以登录到:</Text></Row>
        <Row $h={30} $mt={11} $pl={31}><Radio $on /><Text>所有计算机(C)</Text></Row>
        <Group>
          <Legend><Radio /><Text>下列计算机(T)</Text></Legend>
          <GroupBody>
            <NameColumn>
              <Text>计算机名(O):</Text>
              <NameInput />
              <NameList />
            </NameColumn>
            <ButtonColumn>
              <Button $off><Text>添加(A)</Text></Button>
              <Spacer $h={14} />
              <Button $off><Text>编辑(E)</Text></Button>
              <Spacer $h={16} />
              <Button $off><Text>删除(R)</Text></Button>
            </ButtonColumn>
          </GroupBody>
        </Group>
        <Footer $pad="26px 16px 0 0">
          <Button $off><Text>确定</Text></Button>
          <Button $focus><Text>取消</Text></Button>
        </Footer>
      </Dialog>

      <Mark $x={271} $y={571} $w={436} $h={44} />
      <Mark $x={716} $y={378} $w={156} $h={35} />
      <Mark $x={251} $y={963} $w={660} $h={136} />
      <Note $x={781} $y={455}><Text size={18.5} color="#ed1c24" track={0}>Client</Text></Note>
      <Note $x={673} $y={982}><Text size={18.8} color="#ed1c24" track={0}>shift多选，打开属性</Text></Note>
      <UsbTab>
        <svg width="20" height="29" viewBox="0 0 20 29">
          <path d="M4 6.500V1.500h12v5M2 6.500h16V18q0 9-8 9t-8-9zM6.500 4h2.500M11 4h2.500" fill="none" stroke="#f4a11d" strokeWidth="1.200" />
        </svg>
      </UsbTab>
    </Desktop>
  );
}
